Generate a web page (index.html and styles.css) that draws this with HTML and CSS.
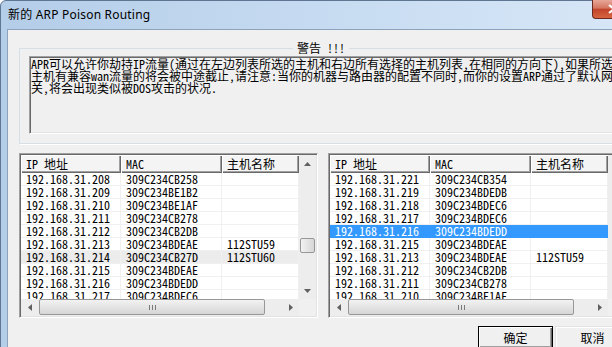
FILE: index.html
```html
<!DOCTYPE html>
<html lang="zh-CN">
<head>
  <meta charset="UTF-8" />
  <meta name="viewport" content="width=device-width, initial-scale=1.0"/>
  <title>新的 ARP Poison Routing</title>
  <link rel="stylesheet" href="styles.css">
</head>
<body>
  <div class="window">
    <div class="titlebar">
      <span class="title">新的 ARP Poison Routing</span>
      <div class="close-btn">
        <svg width="12" height="10" viewBox="0 0 12 10"><path d="M1 1 L11 9 M11 1 L1 9" stroke="#fff" stroke-width="2.2" fill="none"/></svg>
      </div>
    </div>

    <div class="client">
      <fieldset class="group">
        <legend>警告 !!!</legend>
        <div class="edit">
          <div>APR可以允许你劫持IP流量(通过在左边列表所选的主机和右边所有选择的主机列表,在相同的方向下),如果所选</div>
          <div>主机有兼容wan流量的将会被中途截止,请注意:当你的机器与路由器的配置不同时,而你的设置ARP通过了默认网</div>
          <div>关,将会出现类似被DOS攻击的状况.</div>
        </div>
      </fieldset>

      <div class="lists">
        <!-- left list -->
        <div class="list">
          <div class="view">
            <div class="row head"><div>IP 地址</div><div>MAC</div><div>主机名称</div></div>
            <div class="row"><div>192.168.31.208</div><div>309C234CB258</div><div></div></div>
            <div class="row"><div>192.168.31.209</div><div>309C234BE1B2</div><div></div></div>
            <div class="row"><div>192.168.31.210</div><div>309C234BE1AF</div><div></div></div>
            <div class="row"><div>192.168.31.211</div><div>309C234CB278</div><div></div></div>
            <div class="row"><div>192.168.31.212</div><div>309C234CB2DB</div><div></div></div>
            <div class="row"><div>192.168.31.213</div><div>309C234BDEAE</div><div>112STU59</div></div>
            <div class="row hot"><div>192.168.31.214</div><div>309C234CB27D</div><div>112STU60</div></div>
            <div class="row"><div>192.168.31.215</div><div>309C234BDEAE</div><div></div></div>
            <div class="row"><div>192.168.31.216</div><div>309C234BDEDD</div><div></div></div>
            <div class="row"><div>192.168.31.217</div><div>309C234BDEC6</div><div></div></div>
          </div>
          <div class="vscroll">
            <div class="arrow"><svg width="7" height="4"><polygon points="0,4 3.5,0 7,4" fill="#606060"/></svg></div>
            <div class="vtrack"><div class="vthumb"></div></div>
            <div class="arrow"><svg width="7" height="4"><polygon points="0,0 3.5,4 7,0" fill="#606060"/></svg></div>
          </div>
          <div class="hscroll">
            <div class="arrow"><svg width="4" height="7"><polygon points="4,0 0,3.5 4,7" fill="#606060"/></svg></div>
            <div class="hthumb"><svg width="7" height="5"><path d="M0.5 0 V5 M3.5 0 V5 M6.5 0 V5" stroke="#7a7a7a" stroke-width="1"/></svg></div>
            <div class="arrow push"><svg width="4" height="7"><polygon points="0,0 4,3.5 0,7" fill="#606060"/></svg></div>
          </div>
          <div class="corner"></div>
        </div>

        <!-- right list -->
        <div class="list">
          <div class="view">
            <div class="row head"><div>IP 地址</div><div>MAC</div><div>主机名称</div></div>
            <div class="row"><div>192.168.31.221</div><div>309C234CB354</div><div></div></div>
            <div class="row"><div>192.168.31.219</div><div>309C234BDEDB</div><div></div></div>
            <div class="row"><div>192.168.31.218</div><div>309C234BDEC6</div><div></div></div>
            <div class="row"><div>192.168.31.217</div><div>309C234BDEC6</div><div></div></div>
            <div class="row sel"><div>192.168.31.216</div><div>309C234BDEDD</div><div></div></div>
            <div class="row"><div>192.168.31.215</div><div>309C234BDEAE</div><div></div></div>
            <div class="row"><div>192.168.31.213</div><div>309C234BDEAE</div><div>112STU59</div></div>
            <div class="row"><div>192.168.31.212</div><div>309C234CB2DB</div><div></div></div>
            <div class="row"><div>192.168.31.211</div><div>309C234CB278</div><div></div></div>
            <div class="row"><div>192.168.31.210</div><div>309C234BE1AF</div><div></div></div>
          </div>
          <div class="vscroll">
            <div class="arrow"><svg width="7" height="4"><polygon points="0,4 3.5,0 7,4" fill="#606060"/></svg></div>
            <div class="vtrack"></div>
            <div class="arrow"><svg width="7" height="4"><polygon points="0,0 3.5,4 7,0" fill="#606060"/></svg></div>
          </div>
          <div class="hscroll">
            <div class="arrow"><svg width="4" height="7"><polygon points="4,0 0,3.5 4,7" fill="#606060"/></svg></div>
            <div class="hthumb"><svg width="7" height="5"><path d="M0.5 0 V5 M3.5 0 V5 M6.5 0 V5" stroke="#7a7a7a" stroke-width="1"/></svg></div>
            <div class="arrow push"><svg width="4" height="7"><polygon points="0,0 4,3.5 0,7" fill="#606060"/></svg></div>
          </div>
          <div class="corner"></div>
        </div>
      </div>

      <div class="buttons">
        <button type="button" class="btn default">确定</button>
        <button type="button" class="btn">取消</button>
      </div>
    </div>
  </div>
</body>
</html>
```

FILE: styles.css
```css
body {
  margin: 0;
  width: 612px;
  height: 347px;
  overflow: hidden;
  background: #fff;
  font-family: "Noto Sans", "Noto Sans CJK SC", sans-serif;
}

.window {
  box-sizing: border-box;
  width: 643px;
  height: 400px;
  border: 1px solid #5e7692;
  border-radius: 6px 6px 0 0;
  padding: 0 7px 0 6px;
  background: linear-gradient(90deg, #b4cde8 0%, #c6dbf1 50%, #d8e7f7 100%);
}

.titlebar {
  height: 28px;
  display: flex;
  align-items: flex-start;
}

.title {
  padding: 6px 0 0 1px;
  font-size: 12px;
  line-height: 16px;
  letter-spacing: 0.2px;
  color: #000;
}

.close-btn {
  margin-left: auto;
  margin-top: -1px;
  width: 43px;
  height: 19px;
  box-sizing: border-box;
  border: 1px solid #6b2a1e;
  border-top: none;
  border-radius: 0 0 4px 4px;
  background: linear-gradient(#e8a797, #d37560 45%, #c2442b 52%, #d5653f);
  display: flex;
  justify-content: center;
  align-items: center;
}

.client {
  box-sizing: border-box;
  height: 380px;
  border-top: 1px solid #8da2bb;
  border-left: 1px solid #8da2bb;
  background: #f0f0f0;
  padding: 0 0 0 11px;
}

/* group box */
.group {
  width: 600px;
  margin: 11px 0 0;
  padding: 1px 0 9px 9px;
  border: 1px solid #d5dfe5;
  box-shadow: 1px 1px 0 #fff;
}

.group legend {
  margin-left: 264px;
  padding: 0 4px;
  font-family: "Noto Sans Mono CJK SC", "Noto Sans CJK SC", monospace;
  font-size: 12px;
  line-height: 14px;
  color: #000;
}

.edit {
  box-sizing: border-box;
  width: 620px;
  height: 78px;
  padding: 1px;
  border: 1px solid;
  border-color: #a0a0a0 #fff #fff #a0a0a0;
  box-shadow: inset 1px 1px 0 #696969, inset -1px -1px 0 #e3e3e3;
  background: #f0f0f0;
  font-family: "Noto Sans Mono CJK SC", "Noto Sans CJK SC", monospace;
  font-size: 12px;
  line-height: 12px;
  white-space: nowrap;
  overflow: hidden;
  color: #000;
}

/* list views */
.lists {
  display: flex;
  gap: 10px;
  margin-top: 9px;
}

.list {
  flex: none;
  box-sizing: border-box;
  width: 299px;
  height: 165px;
  padding: 1px;
  border: 1px solid;
  border-color: #a0a0a0 #fff #fff #a0a0a0;
  box-shadow: inset 1px 1px 0 #696969, inset -1px -1px 0 #e3e3e3;
  background: #fff;
  display: grid;
  grid-template-columns: 1fr 17px;
  grid-template-rows: 1fr 17px;
}

.view {
  overflow: hidden;
}

.row {
  display: grid;
  grid-template-columns: 100px 101px 1fr;
  height: 13px;
  font-family: "Noto Sans Mono CJK SC", "Noto Sans CJK SC", monospace;
  font-size: 12px;
  line-height: 12px;
  color: #000;
}

.row > div {
  box-sizing: border-box;
  padding-left: 5px;
  border-right: 1px solid #f0f0f0;
  border-bottom: 1px solid #f0f0f0;
  white-space: nowrap;
}

.row.head {
  height: 18px;
}

.row.head > div {
  line-height: 17px;
  border: none;
  background: #f4f4f4;
  box-shadow: inset 1px 1px 0 #fff, inset -1px -1px 0 #696969, inset -2px -2px 0 #a0a0a0;
}

.row.hot > div {
  background: #ececec;
}

.row.sel > div {
  background: #3399ff;
  border-color: #3399ff;
  color: #fff;
}

.vscroll {
  display: flex;
  flex-direction: column;
  background: #ededed;
}

.arrow {
  flex: none;
  width: 17px;
  height: 17px;
  display: flex;
  justify-content: center;
  align-items: center;
}

.vtrack {
  flex: 1;
}

.vthumb {
  margin: 66px 1px 0;
  height: 15px;
  box-sizing: border-box;
  border: 1px solid #979797;
  border-radius: 2px;
  background: linear-gradient(90deg, #f2f2f2, #e4e4e4 50%, #d6d6d6);
}

.hscroll {
  display: flex;
  background: #ededed;
}

.hthumb {
  flex: none;
  width: 226px;
  margin: 0 0 1px 1px;
  box-sizing: border-box;
  border: 1px solid #979797;
  border-radius: 2px;
  background: linear-gradient(#f2f2f2, #e4e4e4 50%, #d6d6d6);
  display: flex;
  justify-content: center;
  align-items: center;
}

.push {
  margin-left: auto;
}

.corner {
  background: #f0f0f0;
}

/* dialog buttons */
.buttons {
  display: flex;
  gap: 2px;
  margin-top: 8px;
  padding-left: 459px;
}

.btn {
  width: 75px;
  height: 23px;
  padding: 0;
  border: 1px solid;
  border-color: #e3e3e3 #696969 #696969 #e3e3e3;
  box-shadow: inset 1px 1px 0 #fff, inset -1px -1px 0 #a0a0a0;
  background: #f0f0f0;
  font-family: "Noto Sans CJK SC", sans-serif;
  font-size: 12px;
  color: #000;
}

.btn.default {
  border: 1px solid #000;
  box-shadow: inset 1px 1px 0 #fff, inset -1px -1px 0 #696969, inset -2px -2px 0 #a0a0a0;
}
```
